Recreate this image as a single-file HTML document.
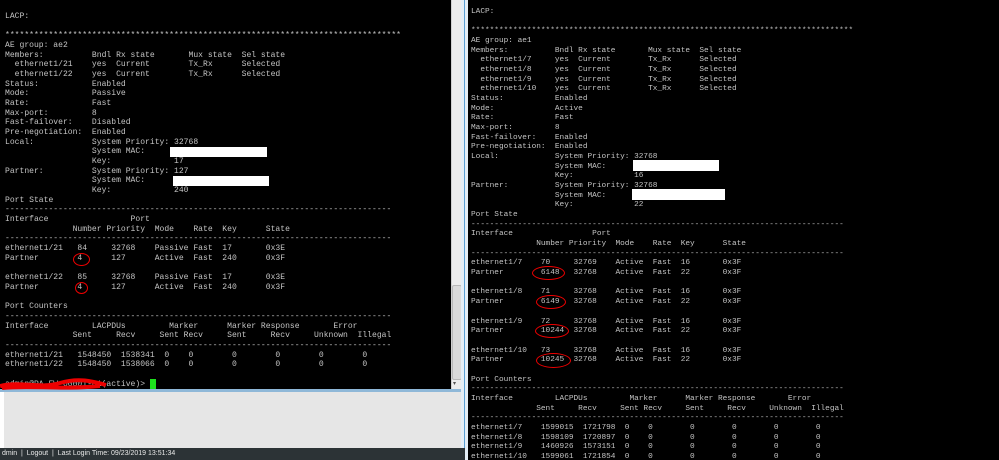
<!DOCTYPE html>
<html><head><meta charset="utf-8"><style>
html,body{margin:0;padding:0;width:999px;height:460px;overflow:hidden;background:#e6e6e6;position:relative}
.p{position:absolute;margin:0;font-family:"Liberation Mono",monospace;color:#c4c4c4;line-height:9.67px;white-space:pre}
.box{position:absolute;background:#fff}
.c{position:absolute;border:1.2px solid #e00;border-radius:50%}
</style></head><body>
<div style="position:absolute;left:0;top:0;width:451px;height:390px;background:#000"></div>
<div style="position:absolute;left:451px;top:0;width:10px;height:390px;background:#ececec;border-left:1px solid #d0d0d0"></div>
<div style="position:absolute;left:452px;top:285px;width:8px;height:93px;background:#dadada;border:1px solid #b8b8b8;border-radius:2px"></div>
<div style="position:absolute;left:453px;top:380px;font-size:6px;color:#555">▾</div>
<div style="position:absolute;left:0;top:389px;width:465px;height:3px;background:#8fb8d8"></div>
<div style="position:absolute;left:0;top:392px;width:4px;height:56px;background:#fff"></div>
<div style="position:absolute;left:461px;top:0;width:7px;height:460px;background:#e4eef6"></div>
<div style="position:absolute;left:464px;top:0;width:1px;height:460px;background:#5a9fd4"></div>
<div style="position:absolute;left:468px;top:0;width:531px;height:460px;background:#000"></div>
<div style="position:absolute;left:0;top:448px;width:465px;height:12px;background:#2c3336;color:#e8e8e8;font:7px 'Liberation Sans',sans-serif;line-height:12px;white-space:pre"> dmin  |  Logout  |  Last Login Time: 09/23/2019 13:51:34</div>
<pre class="p" style="left:5px;top:12px;font-size:8.05px">LACP:

**********************************************************************************
AE group: ae2
Members:          Bndl Rx state       Mux state  Sel state
  ethernet1/21    yes  Current        Tx_Rx      Selected
  ethernet1/22    yes  Current        Tx_Rx      Selected
Status:           Enabled
Mode:             Passive
Rate:             Fast
Max-port:         8
Fast-failover:    Disabled
Pre-negotiation:  Enabled
Local:            System Priority: 32768
                  System MAC:
                  Key:             17
Partner:          System Priority: 127
                  System MAC:
                  Key:             240
Port State
--------------------------------------------------------------------------------
Interface                 Port
              Number Priority  Mode    Rate  Key      State
--------------------------------------------------------------------------------
ethernet1/21   84     32768    Passive Fast  17       0x3E
Partner        4      127      Active  Fast  240      0x3F

ethernet1/22   85     32768    Passive Fast  17       0x3E
Partner        4      127      Active  Fast  240      0x3F

Port Counters
--------------------------------------------------------------------------------
Interface         LACPDUs         Marker      Marker Response       Error
              Sent     Recv     Sent Recv     Sent     Recv     Unknown  Illegal
--------------------------------------------------------------------------------
ethernet1/21   1548450  1538341  0    0        0        0        0        0
ethernet1/22   1548450  1538066  0    0        0        0        0        0

admin@PA-FW-00001-01(active)> </pre>
<div style="position:absolute;left:150px;top:379px;width:6px;height:10px;background:#1de01d"></div>
<svg style="position:absolute;left:0;top:377px" width="110" height="16"><path d="M0 9 C20 4,40 12,60 6 S95 5,106 8 M2 11 C30 8,60 13,100 9" stroke="#e00" stroke-width="4" fill="none"/></svg>
<div class="box" style="left:170px;top:147px;width:97px;height:10px"></div>
<div class="box" style="left:173px;top:176px;width:96px;height:10px"></div>
<div class="c" style="left:73px;top:253px;width:15px;height:11px"></div>
<div class="c" style="left:75px;top:282px;width:11px;height:10px"></div>

<pre class="p" style="left:471px;top:8px;font-size:7.78px">LACP:

**********************************************************************************
AE group: ae1
Members:          Bndl Rx state       Mux state  Sel state
  ethernet1/7     yes  Current        Tx_Rx      Selected
  ethernet1/8     yes  Current        Tx_Rx      Selected
  ethernet1/9     yes  Current        Tx_Rx      Selected
  ethernet1/10    yes  Current        Tx_Rx      Selected
Status:           Enabled
Mode:             Active
Rate:             Fast
Max-port:         8
Fast-failover:    Enabled
Pre-negotiation:  Enabled
Local:            System Priority: 32768
                  System MAC:
                  Key:             16
Partner:          System Priority: 32768
                  System MAC:
                  Key:             22
Port State
--------------------------------------------------------------------------------
Interface                 Port
              Number Priority  Mode    Rate  Key      State
--------------------------------------------------------------------------------
ethernet1/7    70     32769    Active  Fast  16       0x3F
Partner        6148   32768    Active  Fast  22       0x3F

ethernet1/8    71     32768    Active  Fast  16       0x3F
Partner        6149   32768    Active  Fast  22       0x3F

ethernet1/9    72     32768    Active  Fast  16       0x3F
Partner        10244  32768    Active  Fast  22       0x3F

ethernet1/10   73     32768    Active  Fast  16       0x3F
Partner        10245  32768    Active  Fast  22       0x3F

Port Counters
--------------------------------------------------------------------------------
Interface         LACPDUs         Marker      Marker Response       Error
              Sent     Recv     Sent Recv     Sent     Recv     Unknown  Illegal
--------------------------------------------------------------------------------
ethernet1/7    1599015  1721798  0    0        0        0        0        0
ethernet1/8    1598109  1720897  0    0        0        0        0        0
ethernet1/9    1460926  1573151  0    0        0        0        0        0
ethernet1/10   1599061  1721854  0    0        0        0        0        0</pre>
<div class="box" style="left:633px;top:160px;width:86px;height:11px"></div>
<div class="box" style="left:632px;top:189px;width:93px;height:11px"></div>
<div class="c" style="left:532px;top:266px;width:31px;height:12px"></div>
<div class="c" style="left:536px;top:295px;width:28px;height:12px"></div>
<div class="c" style="left:535px;top:324px;width:32px;height:12px"></div>
<div class="c" style="left:536px;top:353px;width:33px;height:13px"></div>
</body></html>
